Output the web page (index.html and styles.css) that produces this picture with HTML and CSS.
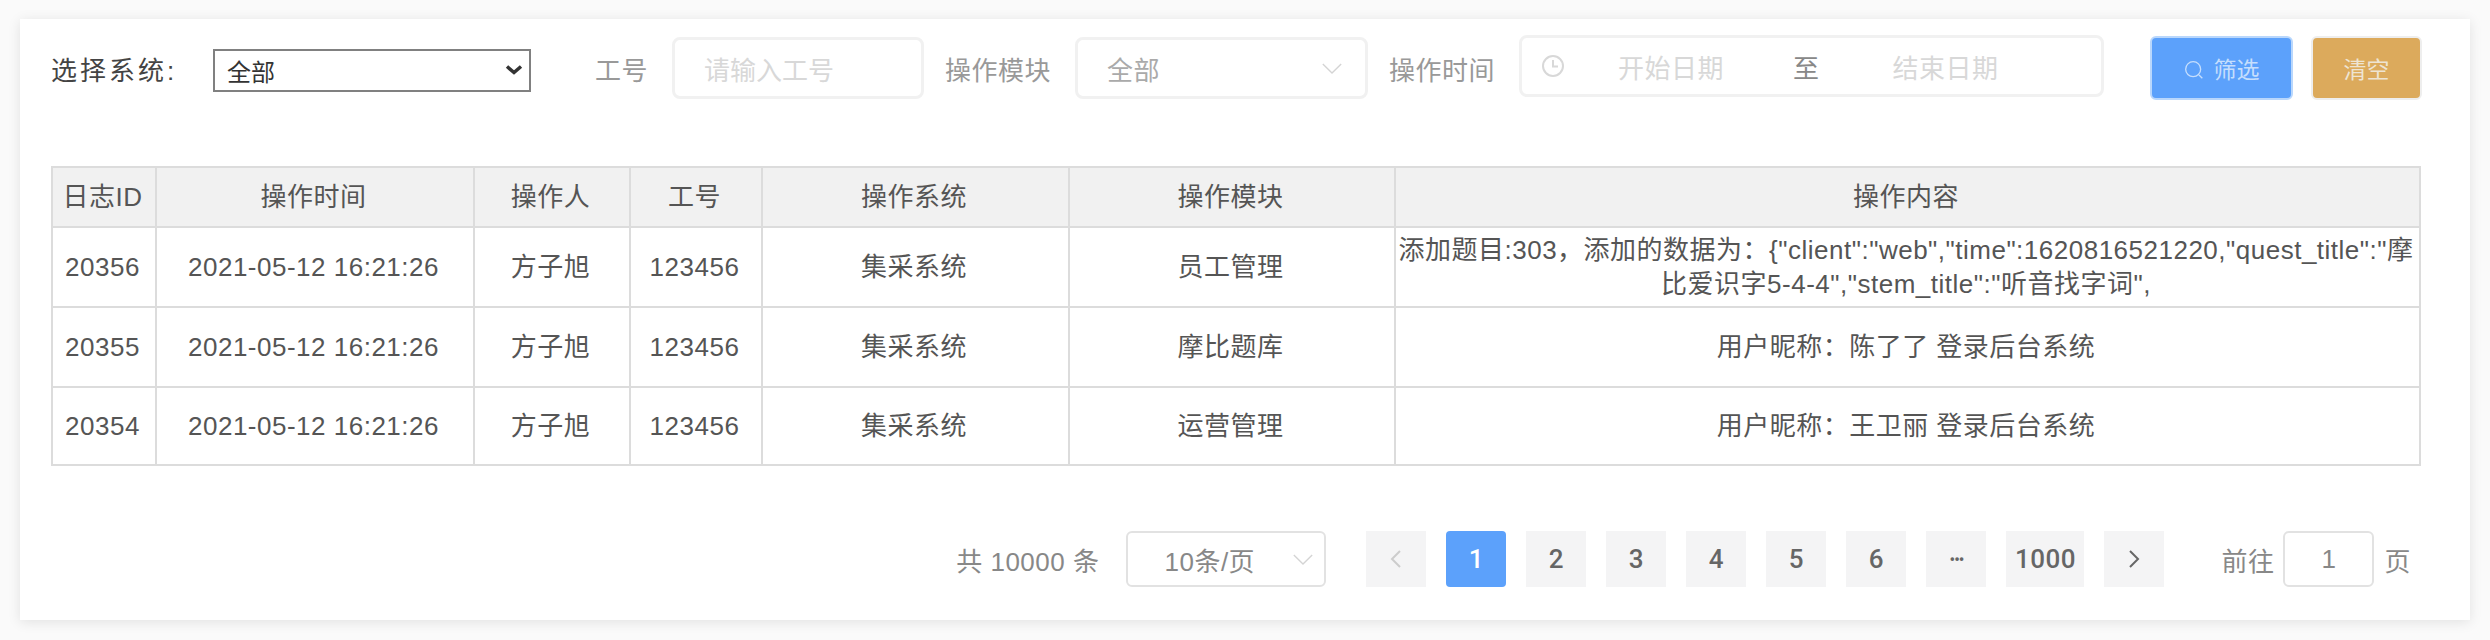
FILE: index.html
```html
<!DOCTYPE html>
<html lang="zh-CN">
<head>
    <meta charset="UTF-8">
    <title>操作日志</title>
    <link rel="stylesheet" href="styles.css">
</head>
<body>
    <main class="card">
        <div class="filter-bar">
            <span class="sys-label">选择系统:</span>
            <div class="sys-wrap">
                <select class="sys-select"><option>全部</option></select>
                <svg class="sys-arrow" viewBox="0 0 18 10"><path d="M2 1.5l7 6 7-6"/></svg>
            </div>
            <span class="filter-label label-no">工号</span>
            <div class="field field-no"><span class="placeholder">请输入工号</span></div>
            <span class="filter-label label-module">操作模块</span>
            <div class="field field-module">
                <span class="field-value">全部</span>
                <svg class="arrow" viewBox="0 0 24 14"><path d="M2 2l10 10L22 2"/></svg>
            </div>
            <span class="filter-label label-time">操作时间</span>
            <div class="field field-date">
                <svg class="clock" viewBox="0 0 24 24"><circle cx="12" cy="12" r="10"/><path d="M12 6v6.5h5"/></svg>
                <span class="placeholder date-start">开始日期</span>
                <span class="date-sep">至</span>
                <span class="placeholder date-end">结束日期</span>
            </div>
            <button class="btn btn-primary">
                <svg class="search" viewBox="0 0 24 24"><circle cx="11" cy="11" r="9"/><path d="M18 18l4 4"/></svg>筛选
            </button>
            <button class="btn btn-warning">清空</button>
        </div>

        <table class="log-table">
            <colgroup>
                <col class="col-id"><col class="col-time"><col class="col-user"><col class="col-no">
                <col class="col-sys"><col class="col-module"><col class="col-content">
            </colgroup>
            <thead>
                <tr>
                    <th>日志ID</th><th>操作时间</th><th>操作人</th><th>工号</th>
                    <th>操作系统</th><th>操作模块</th><th>操作内容</th>
                </tr>
            </thead>
            <tbody>
                <tr>
                    <td>20356</td><td>2021-05-12 16:21:26</td><td>方子旭</td><td>123456</td>
                    <td>集采系统</td><td>员工管理</td>
                    <td class="content-cell">添加题目:303，添加的数据为：{"client":"web","time":1620816521220,"quest_title":"摩<br>比爱识字5-4-4","stem_title":"听音找字词",</td>
                </tr>
                <tr>
                    <td>20355</td><td>2021-05-12 16:21:26</td><td>方子旭</td><td>123456</td>
                    <td>集采系统</td><td>摩比题库</td><td>用户昵称：陈了了 登录后台系统</td>
                </tr>
                <tr class="row-last">
                    <td>20354</td><td>2021-05-12 16:21:26</td><td>方子旭</td><td>123456</td>
                    <td>集采系统</td><td>运营管理</td><td>用户昵称：王卫丽 登录后台系统</td>
                </tr>
            </tbody>
        </table>

        <div class="pager">
            <span class="pager-total">共 10000 条</span>
            <div class="pager-size">
                <span>10条/页</span>
                <svg class="arrow" viewBox="0 0 24 14"><path d="M2 2l10 10L22 2"/></svg>
            </div>
            <ul class="pager-list">
                <li class="page disabled"><svg class="chev" viewBox="0 0 12 20"><path d="M10 2L2 10l8 8"/></svg></li>
                <li class="page active">1</li>
                <li class="page">2</li>
                <li class="page">3</li>
                <li class="page">4</li>
                <li class="page">5</li>
                <li class="page">6</li>
                <li class="page page-more">•••</li>
                <li class="page page-wide">1000</li>
                <li class="page"><svg class="chev" viewBox="0 0 12 20"><path d="M2 2l8 8-8 8"/></svg></li>
            </ul>
            <span class="pager-goto">前往</span>
            <div class="pager-input">1</div>
            <span class="pager-unit">页</span>
        </div>
    </main>
</body>
</html>
```

FILE: styles.css
```css
* {
    box-sizing: border-box;
}
body {
    margin: 0;
    height: 640px;
    overflow: hidden;
    padding: 19px 20px 20px;
    background-color: #fafafa;
    font-family: "Liberation Sans", "Noto Sans CJK SC", sans-serif;
    font-size: 26px;
    letter-spacing: 0.5px;
    color: #555;
}
.card {
    height: 601px;
    padding: 15px 48px 0 31px;
    background: #fff;
    box-shadow: 0 2px 12px rgba(0, 0, 0, 0.1);
}
.filter-bar {
    display: flex;
    align-items: center;
    height: 68px;
    margin-bottom: 64px;
}
.sys-label {
    flex: none;
    width: 162px;
    color: #444;
    letter-spacing: 3px;
}
.sys-wrap {
    position: relative;
    flex: none;
    width: 318px;
    height: 43px;
    margin-top: 4px;
}
.sys-select {
    appearance: none;
    display: block;
    width: 100%;
    height: 100%;
    padding: 5px 0 0 12px;
    border: 2px solid #808080;
    border-radius: 0;
    background: #fff;
    font-family: inherit;
    font-size: 24px;
    color: #333;
}
.sys-arrow {
    position: absolute;
    top: 16px;
    right: 8px;
    width: 18px;
    height: 10px;
    fill: none;
    stroke: #333;
    stroke-width: 3.5;
}
.filter-label {
    flex: none;
    color: #999;
}
.label-no {
    margin-left: 64px;
    margin-right: 24px;
}
.label-module {
    margin-left: 21px;
    margin-right: 24px;
}
.label-time {
    margin-left: 21px;
    margin-right: 24px;
}
.field {
    display: flex;
    flex: none;
    align-items: center;
    height: 62px;
    border: 3px solid #f1f1f1;
    border-radius: 8px;
    color: #aaa;
}
.field-no {
    width: 252px;
    padding-left: 29px;
}
.field-no .placeholder {
    letter-spacing: 0;
}
.field-module {
    width: 293px;
    padding: 0 22px 0 29px;
    justify-content: space-between;
}
.field-date {
    width: 585px;
    margin-bottom: 4px;
    padding-left: 19px;
}
.placeholder {
    color: #d8d8d8;
}
.arrow {
    width: 22px;
    height: 13px;
    fill: none;
    stroke: #d4d4d4;
    stroke-width: 1.5;
}
.clock {
    width: 24px;
    height: 24px;
    fill: none;
    stroke: #d8d8d8;
    stroke-width: 2;
}
.date-start {
    margin-left: 53px;
}
.date-sep {
    margin-left: 69px;
    color: #888;
}
.date-end {
    margin-left: 73px;
}
.btn {
    flex: none;
    height: 64px;
    border-radius: 6px;
    font-family: inherit;
    font-size: 23px;
}
.btn-primary {
    width: 143px;
    margin-left: 46px;
    border: 2px solid #b9d7fc;
    background: #5ca1fb;
    color: #c5defd;
}
.btn-warning {
    width: 111px;
    margin-left: 18px;
    border: 2px solid #eee;
    background: #dcaa5c;
    color: #eee4d2;
}
.search {
    width: 20px;
    height: 20px;
    margin-right: 10px;
    vertical-align: -2px;
    fill: none;
    stroke: #c5defd;
    stroke-width: 1.6;
}
.log-table {
    width: 2368px;
    border-collapse: collapse;
    table-layout: fixed;
    color: #555;
}
.log-table th, .log-table td {
    border: 2px solid #dcdcdc;
    padding: 0 3px 0 0;
    text-align: center;
    font-weight: normal;
    line-height: 34px;
}
.log-table th {
    height: 60px;
    background: #f1f1f1;
}
.log-table td {
    height: 80px;
}
.log-table .row-last td {
    height: 78px;
}
.col-id { width: 104px; }
.col-time { width: 318px; }
.col-user { width: 156px; }
.col-no { width: 132px; }
.col-sys { width: 307px; }
.col-module { width: 326px; }
.col-content { width: 1025px; }
.content-cell {
    white-space: nowrap;
    overflow: hidden;
}
.pager {
    display: flex;
    justify-content: flex-end;
    align-items: center;
    margin-top: 65px;
    height: 56px;
    color: #666;
}
.pager-total {
    color: #888;
    margin-right: 27px;
}
.pager-size {
    display: flex;
    align-items: center;
    justify-content: space-between;
    width: 200px;
    height: 56px;
    margin-right: 40px;
    padding: 0 10px 0 36px;
    border: 2px solid #e2e2e2;
    border-radius: 6px;
    color: #888;
}
.pager-list {
    display: flex;
    gap: 20px;
    margin: 0 57px 0 0;
    padding: 0;
    list-style: none;
}
.page {
    display: flex;
    align-items: center;
    justify-content: center;
    width: 60px;
    height: 56px;
    background: #f4f4f5;
    font-family: Roboto, sans-serif;
    font-weight: 500;
    color: #666;
}
.page-wide {
    width: 78px;
}
.page-more {
    font-size: 16px;
    letter-spacing: -1px;
}
.page.active {
    background: #5ca1fb;
    border-radius: 4px;
    color: #fff;
}
.chev {
    width: 12px;
    height: 20px;
    fill: none;
    stroke: #666;
    stroke-width: 2;
}
.disabled .chev {
    stroke: #ccc;
}
.pager-goto {
    color: #888;
    margin-right: 9px;
}
.pager-input {
    width: 91px;
    height: 56px;
    line-height: 52px;
    border: 2px solid #e2e2e2;
    border-radius: 6px;
    text-align: center;
    color: #888;
}
.pager-unit {
    color: #888;
    margin-left: 10px;
    margin-right: 11px;
}
```
